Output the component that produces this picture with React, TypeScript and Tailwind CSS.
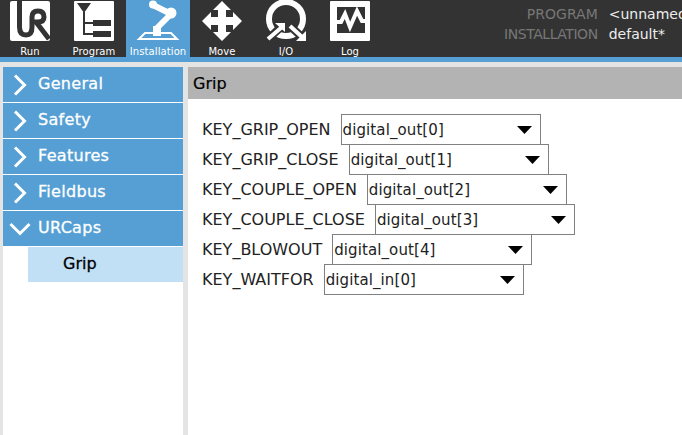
const font = { fontFamily: '"DejaVu Sans", sans-serif' };

function RunIcon() {
  return (
    <svg width="42" height="42" viewBox="0 0 42 42">
      <rect x="1" y="1" width="40" height="40" rx="2" fill="#fff" />
      <path
        d="M10.5 1V27Q10.5 35 17 35Q23 35 23 27V17Q23 11 29 11Q35 11 35 17Q35 22 29 22H27L40 39"
        fill="none"
        stroke="#333"
        strokeWidth="5"
      />
    </svg>
  );
}

function ProgramIcon() {
  return (
    <svg width="42" height="42" viewBox="0 0 42 42">
      <rect x="1" y="1" width="40" height="40" rx="1" fill="#fff" />
      <path d="M4 3H18L11 13Z" fill="#333" />
      <path d="M11 12V34H20M11 23H20" fill="none" stroke="#333" strokeWidth="2" />
      <rect x="20" y="20" width="18" height="6" fill="#333" />
      <rect x="20" y="31" width="18" height="6" fill="#333" />
    </svg>
  );
}

function InstallationIcon() {
  return (
    <svg width="46" height="42" viewBox="0 0 46 42">
      <path d="M4 39L10 33H36L42 39Z" fill="none" stroke="#fff" strokeWidth="2" />
      <path d="M18 36V26H26V36Z" fill="#fff" />
      <path d="M22 28L36 14L18 5" fill="none" stroke="#fff" strokeWidth="6" strokeLinejoin="round" />
      <circle cx="36" cy="13" r="5.5" fill="#fff" />
      <circle cx="18" cy="4.5" r="4" fill="#fff" />
    </svg>
  );
}

function MoveIcon() {
  return (
    <svg width="42" height="42" viewBox="0 0 42 42">
      <path
        d="M21 1L30 10H25V17H32V12L41 21L32 30V25H25V32H30L21 41L12 32H17V25H10V30L1 21L10 12V17H17V10H12Z"
        fill="#fff"
      />
    </svg>
  );
}

function IoIcon() {
  return (
    <svg width="42" height="42" viewBox="0 0 42 42">
      <circle cx="21" cy="19" r="17" fill="none" stroke="#fff" strokeWidth="6" />
      <path d="M2 40L17 26M25 26L38 38" fill="none" stroke="#333" strokeWidth="8" />
      <path d="M3 39L17 27" fill="none" stroke="#fff" strokeWidth="4" />
      <path d="M10 23H20V32Z" fill="#fff" />
      <path d="M25 26L37 37" fill="none" stroke="#fff" strokeWidth="4" />
      <path d="M41 31V41H31Z" fill="#fff" />
    </svg>
  );
}

function LogIcon() {
  return (
    <svg width="42" height="42" viewBox="0 0 42 42">
      <path d="M1 2Q1 1 2 1H40Q41 1 41 2V40Q41 41 40 41H2Q1 41 1 40ZM8 7V33H36V7Z" fill="#fff" fillRule="evenodd" />
      <path d="M8 22H12L16 14L21 27L28 11L33 21H36" fill="none" stroke="#fff" strokeWidth="4" />
    </svg>
  );
}

const tabs = [
  { label: 'Run', icon: <RunIcon /> },
  { label: 'Program', icon: <ProgramIcon /> },
  { label: 'Installation', icon: <InstallationIcon />, active: true },
  { label: 'Move', icon: <MoveIcon /> },
  { label: 'I/O', icon: <IoIcon /> },
  { label: 'Log', icon: <LogIcon /> },
];

const menu = ['General', 'Safety', 'Features', 'Fieldbus'];

const rows = [
  { key: 'KEY_GRIP_OPEN', value: 'digital_out[0]' },
  { key: 'KEY_GRIP_CLOSE', value: 'digital_out[1]' },
  { key: 'KEY_COUPLE_OPEN', value: 'digital_out[2]' },
  { key: 'KEY_COUPLE_CLOSE', value: 'digital_out[3]' },
  { key: 'KEY_BLOWOUT', value: 'digital_out[4]' },
  { key: 'KEY_WAITFOR', value: 'digital_in[0]' },
];

export default function App() {
  return (
    <div className="flex h-[435px] w-[682px] flex-col overflow-hidden bg-white" style={font}>
      {/* Top bar */}
      <header className="flex h-[57px] shrink-0 bg-[#333333]">
        <nav className="-ml-0.5 flex">
          {tabs.map((tab) => (
            <div
              key={tab.label}
              className={`flex h-[57px] w-16 flex-col items-center ${tab.active ? 'bg-[#559fd4]' : ''}`}
            >
              <div className="flex h-[42px] items-center justify-center">{tab.icon}</div>
              <span className="mt-[5px] text-[10px] leading-[10px] tracking-[0.1px] text-white">{tab.label}</span>
            </div>
          ))}
        </nav>
        <div className="ml-[122px] flex gap-[11px] whitespace-nowrap pt-1 text-[14px] leading-[20px]">
          <div className="flex flex-col items-end text-[#777777]">
            <span>PROGRAM</span>
            <span className="tracking-[-0.45px]">INSTALLATION</span>
          </div>
          <div className="flex flex-col text-[#eeeeee]">
            <span>&lt;unnamed&gt;</span>
            <span>default*</span>
          </div>
        </div>
      </header>
      <div className="h-[5px] shrink-0 bg-[#559fd4]" />
      <div className="h-[5px] shrink-0 bg-[#e4e4e4]" />

      <div className="flex min-h-0 flex-1">
        {/* Side menu */}
        <aside className="flex w-[188px] shrink-0 flex-col border-l-[3px] border-r-[5px] border-[#e4e4e4] bg-white">
          {menu.map((item) => (
            <div key={item} className="mb-px flex h-[35px] items-center bg-[#559fd4]">
              <svg width="14" height="22" viewBox="0 0 14 22" className="ml-2.5">
                <path d="M2 1.5L11.5 11L2 20.5" fill="none" stroke="#fff" strokeWidth="3" />
              </svg>
              <span className="mb-0.5 ml-[11px] text-[16px] tracking-[0.3px] text-white [-webkit-text-stroke:0.3px_#fff]">
                {item}
              </span>
            </div>
          ))}
          <div className="mb-px flex h-[35px] items-center bg-[#559fd4]">
            <svg width="22" height="14" viewBox="0 0 22 14" className="ml-1.5">
              <path d="M1.5 2L11 11.5L20.5 2" fill="none" stroke="#fff" strokeWidth="3" />
            </svg>
            <span className="mb-0.5 ml-[7px] text-[16px] tracking-[0.3px] text-white [-webkit-text-stroke:0.3px_#fff]">
              URCaps
            </span>
          </div>
          <div className="ml-[25px] flex h-[35px] items-center bg-[#c1e0f5] pb-0.5 pl-[35px] text-[16px] text-black [-webkit-text-stroke:0.3px_#000]">
            Grip
          </div>
        </aside>

        {/* Content */}
        <main className="min-w-0 flex-1">
          <div className="flex h-8 items-center bg-[#b3b3b3] pl-[5px] pt-px text-[16px] text-black [-webkit-text-stroke:0.2px_#000]">
            Grip
          </div>
          <div className="flex flex-col pl-[14px] pt-[15px]">
            {rows.map((row) => (
              <div key={row.key} className="-mb-px flex h-[31px] items-center whitespace-nowrap">
                <span className="text-[16px] text-[#222222]">{row.key}</span>
                <div className="ml-2.5 flex h-[31px] w-[200px] items-center justify-between border border-[#808080] bg-white pl-px pr-2 text-[15px] tracking-[0.1px] text-[#222222]">
                  <span className="pt-px">{row.value}</span>
                  <svg width="15" height="8" viewBox="0 0 15 8">
                    <path d="M0 0H15L7.5 8Z" fill="#000" />
                  </svg>
                </div>
              </div>
            ))}
          </div>
        </main>
      </div>
    </div>
  );
}
